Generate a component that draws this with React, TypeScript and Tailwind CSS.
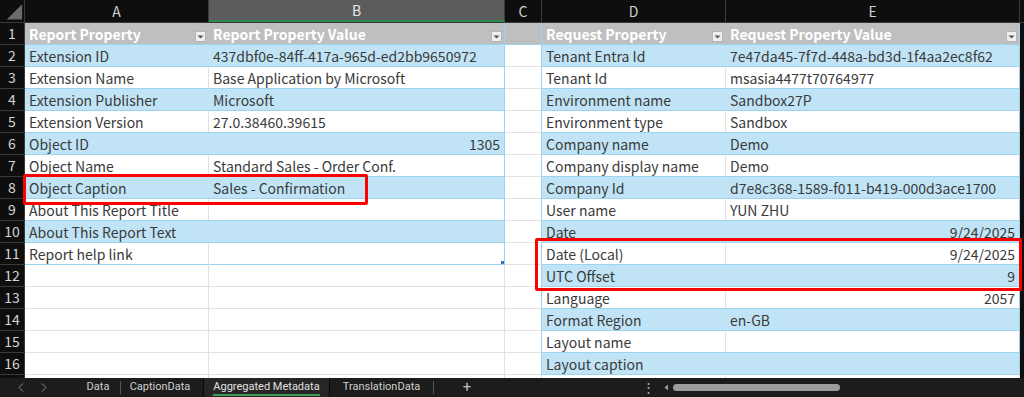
import React from "react";

const FONT = { fontFamily: '"Noto Sans CJK JP", "Noto Sans", sans-serif' };
const TABFONT = { fontFamily: 'Roboto, "Noto Sans", sans-serif' };

type Row = {
  a?: string;
  b?: string;
  bRight?: boolean;
  d?: string;
  e?: string;
  eRight?: boolean;
};

const rows: Row[] = [
  { a: "Report Property", b: "Report Property Value", d: "Request Property", e: "Request Property Value" },
  { a: "Extension ID", b: "437dbf0e-84ff-417a-965d-ed2bb9650972", d: "Tenant Entra Id", e: "7e47da45-7f7d-448a-bd3d-1f4aa2ec8f62" },
  { a: "Extension Name", b: "Base Application by Microsoft", d: "Tenant Id", e: "msasia4477t70764977" },
  { a: "Extension Publisher", b: "Microsoft", d: "Environment name", e: "Sandbox27P" },
  { a: "Extension Version", b: "27.0.38460.39615", d: "Environment type", e: "Sandbox" },
  { a: "Object ID", b: "1305", bRight: true, d: "Company name", e: "Demo" },
  { a: "Object Name", b: "Standard Sales - Order Conf.", d: "Company display name", e: "Demo" },
  { a: "Object Caption", b: "Sales - Confirmation", d: "Company Id", e: "d7e8c368-1589-f011-b419-000d3ace1700" },
  { a: "About This Report Title", b: "", d: "User name", e: "YUN ZHU" },
  { a: "About This Report Text", b: "", d: "Date", e: "9/24/2025", eRight: true },
  { a: "Report help link", b: "", d: "Date (Local)", e: "9/24/2025", eRight: true },
  { d: "UTC Offset", e: "9", eRight: true },
  { d: "Language", e: "2057", eRight: true },
  { d: "Format Region", e: "en-GB" },
  { d: "Layout name", e: "" },
  { d: "Layout caption", e: "" },
  { d: "", e: "" },
];

function Filter() {
  return (
    <div className="absolute right-[2px] top-[8px] w-[11px] h-[11px] bg-[#efefef] border border-[#b5b5b5] flex items-center justify-center">
      <svg width="7" height="4" viewBox="0 0 7 4">
        <path d="M0.5 0.5 L6.5 0.5 L3.5 3.5 Z" fill="#555" />
      </svg>
    </div>
  );
}

function ColHead({ label, w, active }: { label: string; w: string; active?: boolean }) {
  return (
    <div
      className={`${w} h-full shrink-0 flex items-center justify-center border-r border-[#3a3a3a] text-[14px] ${
        active ? "bg-[#5c5c5c] text-[#e8e8e8] border-b-2 border-b-[#2f8a52]" : "text-[#cfcfcf]"
      }`}
    >
      {label}
    </div>
  );
}

function Sep() {
  return <div className="h-[13px] w-px bg-[#555] shrink-0" />;
}

export default function App() {
  return (
    <div className="w-[1024px] h-[397px] bg-[#0e0e0e] overflow-hidden relative flex flex-col" style={FONT}>
      <div className="h-[378px] shrink-0 overflow-hidden">
        {/* column header */}
        <div className="flex h-[23px] bg-[#0e0e0e] border-b border-[#3a3a3a]">
          <div className="w-[25px] h-full shrink-0 border-r border-[#3a3a3a] flex items-end justify-end">
            <svg width="25" height="23" viewBox="0 0 25 23">
              <path d="M7 21 L23 21 L23 5 Z" fill="#6b6b6b" />
            </svg>
          </div>
          <ColHead label="A" w="w-[184px]" />
          <ColHead label="B" w="w-[296px]" active />
          <ColHead label="C" w="w-[37px]" />
          <ColHead label="D" w="w-[184px]" />
          <ColHead label="E" w="w-[294px]" />
        </div>
        {rows.map((r, i) => {
          const n = i + 1;
          const header = n === 1;
          const leftTable = n <= 11;
          const rightTable = n <= 16;
          const stripe = n % 2 === 0;
          const leftBg = header ? "bg-[#bfbfbf]" : leftTable && stripe ? "bg-[#c0e4f5]" : "bg-white";
          const rightBg = header ? "bg-[#bfbfbf]" : rightTable && stripe ? "bg-[#c0e4f5]" : "bg-white";
          const leftB = leftTable ? "border-b-[#9dd3ee]" : "border-b-[#e1e1e1]";
          const rightB = rightTable ? "border-b-[#9dd3ee]" : "border-b-[#e1e1e1]";
          const txt = header ? "text-white font-semibold" : "text-[#3a3a3a]";
          const innerA = header || (leftTable && stripe) ? "border-r-transparent" : "border-r-[#e1e1e1]";
          const innerD = header || (rightTable && stripe) ? "border-r-transparent" : "border-r-[#e1e1e1]";
          return (
            <div key={n} className="flex h-[22px] text-[14px] leading-[23px]">
              <div className="w-[25px] shrink-0 bg-[#0e0e0e] text-[#d4d4d4] border-r border-b border-[#3a3a3a] flex items-center justify-center text-[14px]">
                {n <= 16 ? n : null}
              </div>
              <div className={`w-[184px] shrink-0 ${leftBg} border-b border-r ${leftB} ${innerA} ${txt} pl-[4px] whitespace-nowrap overflow-hidden relative`}>
                {r.a}
                {header && <Filter />}
              </div>
              <div
                className={`w-[296px] shrink-0 ${leftBg} border-b border-r ${leftB} ${
                  leftTable ? "border-r-[#9dd3ee]" : "border-r-[#e1e1e1]"
                } ${txt} px-[4px] whitespace-nowrap overflow-hidden relative ${r.bRight ? "text-right" : ""}`}
              >
                {r.b}
                {header && <Filter />}
                {n === 11 && <div className="absolute right-0 bottom-0 w-[3px] h-[3px] bg-[#3b6fc4]" />}
              </div>
              <div
                className={`w-[37px] shrink-0 ${header ? "bg-[#bfbfbf]" : "bg-white"} border-b border-r ${
                  header ? "border-b-[#9dd3ee]" : "border-b-[#e1e1e1]"
                } ${rightTable ? "border-r-[#9dd3ee]" : "border-r-[#e1e1e1]"}`}
              />
              <div className={`w-[184px] shrink-0 ${rightBg} border-b border-r ${rightB} ${innerD} ${txt} pl-[4px] whitespace-nowrap overflow-hidden relative`}>
                {r.d}
                {header && <Filter />}
              </div>
              <div
                className={`w-[294px] shrink-0 ${rightBg} border-b border-r ${rightB} ${
                  rightTable ? "border-r-[#9dd3ee]" : "border-r-[#e1e1e1]"
                } ${txt} px-[4px] whitespace-nowrap overflow-hidden relative ${r.eRight ? "text-right" : ""}`}
              >
                {r.e}
                {header && <Filter />}
              </div>
            </div>
          );
        })}
      </div>

      {/* tab bar */}
      <div className="h-[19px] shrink-0 bg-[#1c1c1c] flex items-center text-[11px] text-[#d0d0d0] whitespace-nowrap" style={TABFONT}>
        <div className="w-[76px] shrink-0 flex items-center pl-[18px] gap-[17px]">
          <svg width="6" height="9" viewBox="0 0 6 9">
            <path d="M5 0.5 L1 4.5 L5 8.5" stroke="#8a8a8a" strokeWidth="1" fill="none" />
          </svg>
          <svg width="6" height="9" viewBox="0 0 6 9">
            <path d="M1 0.5 L5 4.5 L1 8.5" stroke="#8a8a8a" strokeWidth="1" fill="none" />
          </svg>
        </div>
        <div className="w-[44px] shrink-0 text-center">Data</div>
        <Sep />
        <div className="w-[78px] shrink-0 text-center">CaptionData</div>
        <div className="ml-[4px] h-full w-[127px] shrink-0 bg-[#262626] border-x border-[#0a0a0a] rounded-b-[3px] flex items-center justify-center text-[#e0e0e0]">
          <span className="border-b-2 border-[#3d9a5c] leading-[14px]">Aggregated Metadata</span>
        </div>
        <div className="w-[103px] shrink-0 text-center">TranslationData</div>
        <Sep />
        <div className="w-[66px] shrink-0 text-center text-[15px] text-[#c0c0c0]">+</div>
        <div className="w-[140px] shrink-0" />
        <div className="w-[17px] shrink-0 text-center text-[#bdbdbd] text-[13px]">⋮</div>
        <svg className="ml-[7px] shrink-0" width="5" height="7" viewBox="0 0 5 7">
          <path d="M4 0.5 L4 6.5 L0.5 3.5 Z" fill="#9a9a9a" />
        </svg>
        <div className="ml-[4px] w-[167px] h-[7px] rounded-full bg-[#9c9c9c] shrink-0" />
      </div>

      {/* red annotation boxes */}
      <div className="absolute left-[23px] top-[174px] w-[345px] h-[31px] border-[3px] border-[#ff0000] rounded-[2px] pointer-events-none" />
      <div className="absolute left-[535px] top-[238px] w-[487px] h-[53px] border-[3px] border-[#ff0000] rounded-[2px] pointer-events-none" />
    </div>
  );
}
